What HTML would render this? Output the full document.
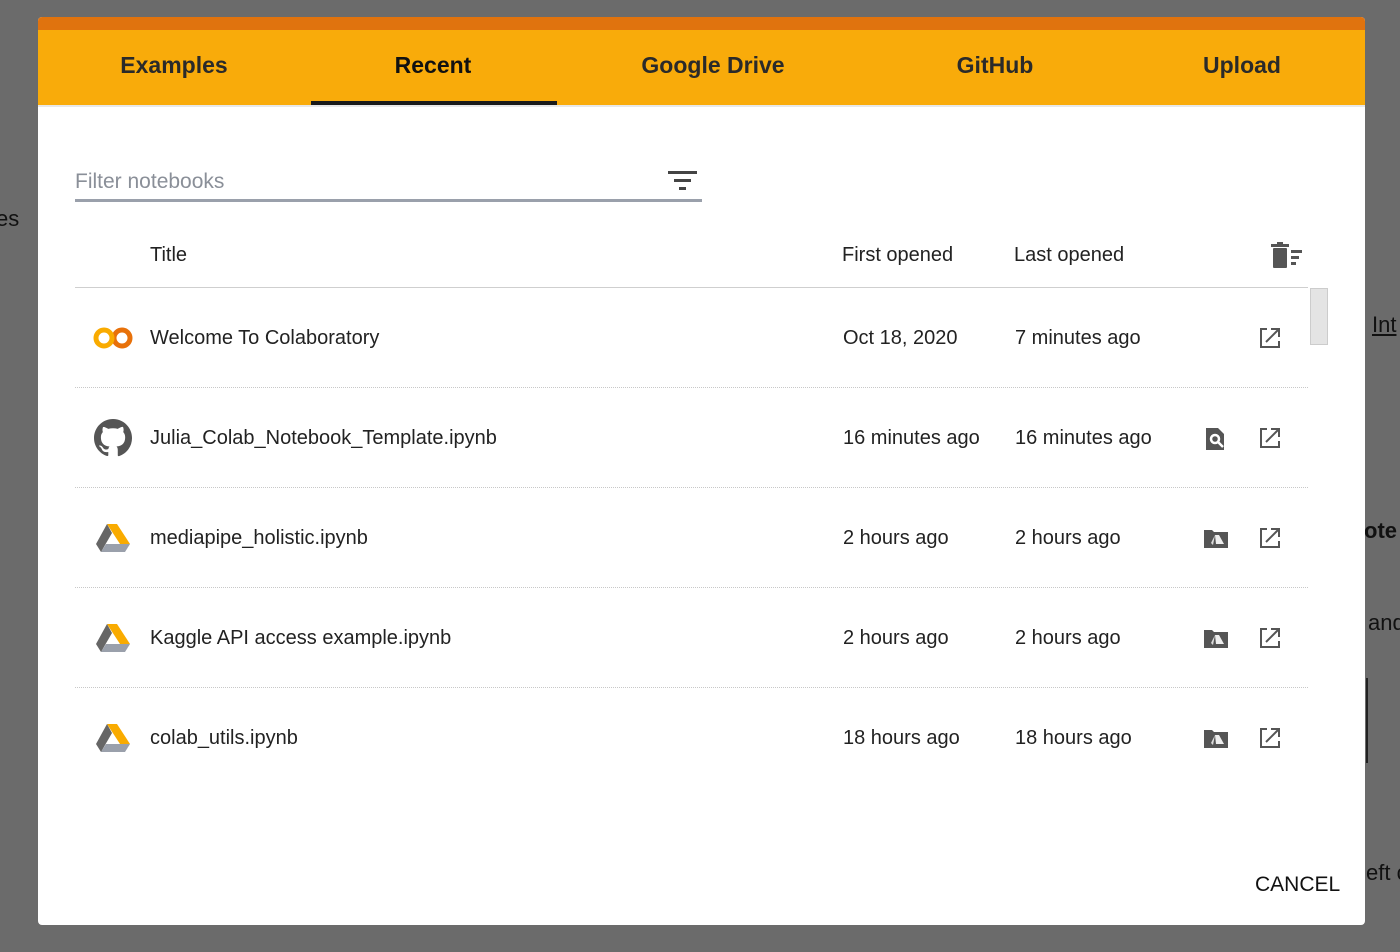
<!DOCTYPE html><html><head><style>
body{margin:0;width:1400px;height:952px;background:#6b6b6b;position:relative;overflow:hidden;font-family:"Liberation Sans",sans-serif;color:#202124}
.a{position:absolute;white-space:nowrap}
.dlg{left:38px;top:17px;width:1327px;height:908px;background:#fff;border-radius:4px;overflow:hidden}
.top{left:0;top:0;width:1327px;height:13px;background:#e0730e}
.tabs{left:0;top:13px;width:1327px;height:75px;background:#f9ab0a;border-bottom:2px solid #e8e8e8}
.tab{top:22px;font-size:23px;font-weight:bold;color:#2a2a2a;transform:translateX(-50%)}
.t{font-size:20px;color:#222}
.sep{left:37px;width:1233px;border-top:1px dotted #c8c8c8}
.bg{font-size:22px;color:#111}
</style></head><body>
<div class="a bg" style="left:-4px;top:206px">es</div>
<div class="a bg" style="left:1372px;top:312px;text-decoration:underline">Int</div>
<div class="a bg" style="left:1364px;top:518px;font-weight:bold">ote</div>
<div class="a bg" style="left:1368px;top:610px">and</div>
<div class="a bg" style="left:1366px;top:860px">eft c</div>
<div class="a" style="left:1366px;top:678px;width:2px;height:85px;background:#222"></div>
<div class="a dlg">
 <div class="a top"></div>
 <div class="a tabs">
  <div class="a tab" style="left:136px">Examples</div>
  <div class="a tab" style="left:395px;color:#111">Recent</div>
  <div class="a tab" style="left:675px">Google Drive</div>
  <div class="a tab" style="left:957px">GitHub</div>
  <div class="a tab" style="left:1204px">Upload</div>
  <div class="a" style="left:273px;top:71px;width:246px;height:4px;background:#1a1a1a"></div>
 </div>
 <div class="a" style="left:37px;top:153px;font-size:21px;color:#8a8f98">Filter notebooks</div>
 <div class="a" style="left:37px;top:182px;width:627px;height:3px;background:#9aa0ab"></div>
 <svg class="a" style="left:630px;top:154px" width="30" height="22"><rect x="0" y="0" width="29" height="3" fill="#444"/><rect x="6" y="8" width="17" height="3" fill="#444"/><rect x="11" y="16" width="7" height="3" fill="#444"/></svg>
 <div class="a t" style="left:112px;top:227px">Title</div>
 <div class="a t" style="left:804px;top:227px">First opened</div>
 <div class="a t" style="left:976px;top:227px">Last opened</div>
 <svg class="a" style="left:1232px;top:225px" width="34" height="28"><rect x="1" y="2" width="18" height="3" fill="#555"/><rect x="7" y="0" width="6" height="3" fill="#555"/><rect x="3" y="6" width="14" height="20" rx="1" fill="#555"/><rect x="21" y="8" width="11" height="3" fill="#555"/><rect x="21" y="14" width="8" height="3" fill="#555"/><rect x="21" y="20" width="5" height="3" fill="#555"/></svg>
 <div class="a" style="left:37px;top:270px;width:1233px;border-top:1px solid #cfcfcf"></div>
 <div class="a" style="left:1272px;top:271px;width:16px;height:55px;background:#e4e4e4;border:1px solid #ccc"></div>
 <div class="a sep" style="top:370px"></div><div class="a sep" style="top:470px"></div><div class="a sep" style="top:570px"></div><div class="a sep" style="top:670px"></div>
 <svg class="a" style="left:55px;top:309px" width="40" height="24"><circle cx="29" cy="12" r="8" fill="none" stroke="#e8710a" stroke-width="5"/><circle cx="11" cy="12" r="8" fill="none" stroke="#f9ab00" stroke-width="5"/></svg>
 <svg class="a" style="left:56px;top:402px" width="38" height="38" viewBox="0 0 16 16"><path fill="#555" d="M8 0C3.58 0 0 3.58 0 8c0 3.540 2.29 6.53 5.47 7.59.4.07.55-.17.55-.38v-1.33c-2.23.48-2.7-1.07-2.7-1.070-.36-.92-.89-1.17-.89-1.17-.73-.5.05-.49.05-.49.8.06 1.230.83 1.23.83.71 1.23 1.87.87 2.33.67.07-.52.28-.87.51-1.07-1.78-.2-3.64-.89-3.64-3.95 0-.87.31-1.59.83-2.15-.08-.2-.36-1.02.08-2.12 0 0 .67-.21 2.2.82.64-.18 1.32-.27 2-.27.68 0 1.36.09 2 .27 1.53-1.04 2.2-.82 2.2-.82.44 1.1.16 1.92.08 2.12.51.56.82 1.27.82 2.15 0 3.07-1.87 3.75-3.650 3.95.29.25.54.73.54 1.48v2.2c0 .21.15.46.55.38A8.013 8.013 0 0016 8c0-4.42-3.58-8-8-8z"/></svg>
 <svg class="a" style="left:57px;top:506px" width="36" height="30"><polygon points="12,1 22,1 35,21 25,21" fill="#f9ab00"/><polygon points="11,21 35,21 30,29 6,29" fill="#9aa0ab"/><polygon points="12,1 17,10 6,29 1,21" fill="#666"/></svg>
 <svg class="a" style="left:57px;top:606px" width="36" height="30"><polygon points="12,1 22,1 35,21 25,21" fill="#f9ab00"/><polygon points="11,21 35,21 30,29 6,29" fill="#9aa0ab"/><polygon points="12,1 17,10 6,29 1,21" fill="#666"/></svg>
 <svg class="a" style="left:57px;top:706px" width="36" height="30"><polygon points="12,1 22,1 35,21 25,21" fill="#f9ab00"/><polygon points="11,21 35,21 30,29 6,29" fill="#9aa0ab"/><polygon points="12,1 17,10 6,29 1,21" fill="#666"/></svg>
 <div class="a t" style="left:112px;top:310px">Welcome To Colaboratory</div>
 <div class="a t" style="left:112px;top:410px">Julia_Colab_Notebook_Template.ipynb</div>
 <div class="a t" style="left:112px;top:510px">mediapipe_holistic.ipynb</div>
 <div class="a t" style="left:112px;top:610px">Kaggle API access example.ipynb</div>
 <div class="a t" style="left:112px;top:710px">colab_utils.ipynb</div>
 <div class="a t" style="left:805px;top:310px">Oct 18, 2020</div><div class="a t" style="left:977px;top:310px">7 minutes ago</div>
 <div class="a t" style="left:805px;top:410px">16 minutes ago</div><div class="a t" style="left:977px;top:410px">16 minutes ago</div>
 <div class="a t" style="left:805px;top:510px">2 hours ago</div><div class="a t" style="left:977px;top:510px">2 hours ago</div>
 <div class="a t" style="left:805px;top:610px">2 hours ago</div><div class="a t" style="left:977px;top:610px">2 hours ago</div>
 <div class="a t" style="left:805px;top:710px">18 hours ago</div><div class="a t" style="left:977px;top:710px">18 hours ago</div>
 <svg class="a" style="left:1220px;top:309px" width="24" height="24"><path d="M9 3H3v18h18v-6" fill="none" stroke="#555" stroke-width="2"/><path d="M8 16L20 4M13 3h8v8" fill="none" stroke="#555" stroke-width="2"/></svg>
 <svg class="a" style="left:1220px;top:409px" width="24" height="24"><path d="M9 3H3v18h18v-6" fill="none" stroke="#555" stroke-width="2"/><path d="M8 16L20 4M13 3h8v8" fill="none" stroke="#555" stroke-width="2"/></svg>
 <svg class="a" style="left:1220px;top:509px" width="24" height="24"><path d="M9 3H3v18h18v-6" fill="none" stroke="#555" stroke-width="2"/><path d="M8 16L20 4M13 3h8v8" fill="none" stroke="#555" stroke-width="2"/></svg>
 <svg class="a" style="left:1220px;top:609px" width="24" height="24"><path d="M9 3H3v18h18v-6" fill="none" stroke="#555" stroke-width="2"/><path d="M8 16L20 4M13 3h8v8" fill="none" stroke="#555" stroke-width="2"/></svg>
 <svg class="a" style="left:1220px;top:709px" width="24" height="24"><path d="M9 3H3v18h18v-6" fill="none" stroke="#555" stroke-width="2"/><path d="M8 16L20 4M13 3h8v8" fill="none" stroke="#555" stroke-width="2"/></svg>
 <svg class="a" style="left:1167px;top:410px" width="22" height="24"><path d="M1 1h12l6 6v16H1z" fill="#555"/><circle cx="10" cy="12" r="4" fill="none" stroke="#fff" stroke-width="2.5"/><path d="M13 15l5 5" stroke="#fff" stroke-width="2.5"/></svg>
 <svg class="a" style="left:1166px;top:511px" width="24" height="20"><path d="M0 2h8l2 2h14v16H0z" fill="#555"/><polygon points="11,7 15,7 20,16 12,16" fill="#fff" opacity=".9"/><polygon points="11,7 7,15 9,17" fill="#ddd"/></svg>
 <svg class="a" style="left:1166px;top:611px" width="24" height="20"><path d="M0 2h8l2 2h14v16H0z" fill="#555"/><polygon points="11,7 15,7 20,16 12,16" fill="#fff" opacity=".9"/><polygon points="11,7 7,15 9,17" fill="#ddd"/></svg>
 <svg class="a" style="left:1166px;top:711px" width="24" height="20"><path d="M0 2h8l2 2h14v16H0z" fill="#555"/><polygon points="11,7 15,7 20,16 12,16" fill="#fff" opacity=".9"/><polygon points="11,7 7,15 9,17" fill="#ddd"/></svg>
 <div class="a" style="left:1217px;top:856px;font-size:21px;color:#111">CANCEL</div>
</div>
</body></html>
